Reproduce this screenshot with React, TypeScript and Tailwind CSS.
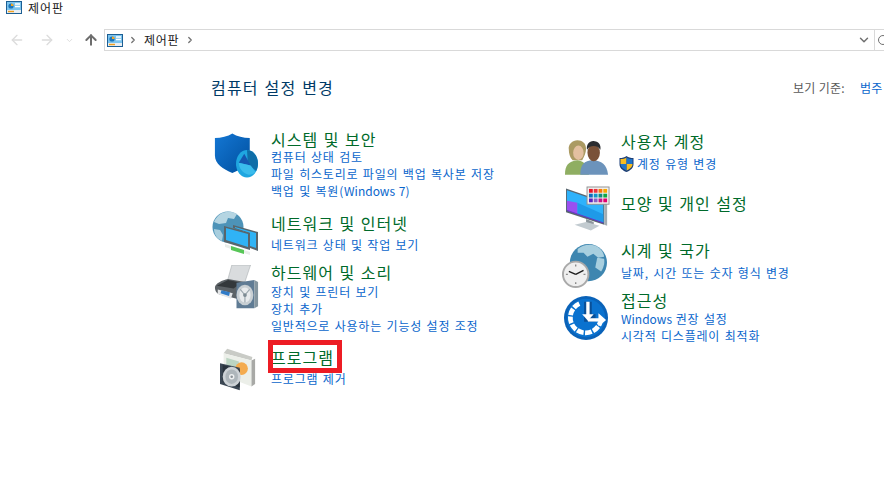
import { ChevronDown, ChevronRight, ArrowLeft, ArrowRight, ArrowUp, RotateCw } from "lucide-react";
import type { ReactNode } from "react";

const font = { fontFamily: '"Noto Sans CJK KR", "Noto Sans", sans-serif' };

function PanelIcon() {
  return (
    <svg width="16" height="13" viewBox="0 0 16 13">
      <rect x="0.5" y="0.5" width="15" height="12" fill="#7cc4ee" stroke="#1c5f94" />
      <rect x="1" y="9" width="14" height="3" fill="#e9eef2" />
      <circle cx="5" cy="5" r="2.6" fill="#1c76bb" />
      <path d="M5 5V2.4A2.6 2.6 0 0 1 7.6 5Z" fill="#f5a623" />
      <path d="M9 3h5M9 5.5h5" stroke="#fff" strokeWidth="1.4" />
      <path d="M2 10.500h6" stroke="#f0a020" strokeWidth="1.4" />
    </svg>
  );
}

function ShieldIcon() {
  return (
    <svg width="44" height="45" viewBox="0 0 48 48">
      <defs>
        <linearGradient id="sh" x1="0" y1="0" x2="1" y2="1">
          <stop offset="0" stopColor="#1477d4" />
          <stop offset="1" stopColor="#004f9e" />
        </linearGradient>
      </defs>
      <path d="M1 5C8 5 15 3 20 0c5 3 12 5 19 5v20C39 33 30 39 20 43 10 39 1 33 1 24Z" fill="url(#sh)" />
      <ellipse cx="36" cy="33" rx="12" ry="15" fill="#1fa6e0" />
      <path d="M36 18c7 0 12 7 12 15 0 3-1 6-2 8l-9-8Z" fill="#0f6ea8" />
      <path d="M33 22l-6 10 13 3Z" fill="#1557b0" />
      <path d="M40 35l-13-3c0 5 4 12 11 13 3 0 6-1 7-3Z" fill="#3bbcec" />
    </svg>
  );
}

function NetworkIcon() {
  return (
    <svg width="48" height="48" viewBox="0 0 48 48">
      <circle cx="16" cy="18" r="15.500" fill="#4d93b8" />
      <path d="M7 6c5-4 13-4 18-1l-3 5-6-1-2 5-7 1-5-2c1-3 3-5 5-7Z" fill="#b5d5e2" />
      <path d="M2 20l6 1 3 5-1 6C5 30 2 25 2 20Z" fill="#a8cede" />
      <path d="M21 16l25 7v19l-8-3v-14l-17-6Z" fill="#59656b" />
      <path d="M23 18l21 6v15l-6-2V24l-15-5Z" fill="#30b3f5" />
      <path d="M12 17l26 7v17l-26-8Z" fill="#59656b" />
      <path d="M14 19l22 6v13l-22-7Z" fill="#30b3f5" />
      <path d="M13 35l25 8v3L13 38Z" fill="#e9edea" />
      <path d="M19 37l13 4v4l-13-4Z" fill="#57c657" />
    </svg>
  );
}

function PrinterIcon() {
  return (
    <svg width="47" height="45" viewBox="0 0 48 48">
      <path d="M19 0h20l-6 18H14Z" fill="#d9dcde" stroke="#9aa0a3" strokeWidth="0.5" />
      <path d="M1 24c0-4 8-8 14-9l18 3v20L8 32c-5-1-7-4-7-8Z" fill="#5c6266" />
      <path d="M3 22l12-6 14 3-8 6Z" fill="#33383b" />
      <path d="M4 26l16 4-2 6-14-5Z" fill="#e4e6e8" />
      <path d="M8 27l9 2-1 4-9-3Z" fill="#2f7bc8" />
      <path d="M24 19l19-3v30l-19 0Z" fill="#5f7b94" />
      <path d="M43 16l4 2v26l-4 2Z" fill="#84959f" />
      <ellipse cx="33" cy="32" rx="9" ry="11" fill="#c8cfd3" />
      <ellipse cx="33" cy="32" rx="6" ry="8" fill="#e8ebed" />
      <path d="M33 32l5-6M33 32l-5-6M33 32v8" stroke="#9aa6ad" strokeWidth="1.2" />
      <circle cx="33" cy="32" r="2" fill="#7d8b93" />
    </svg>
  );
}

function ProgramIcon() {
  return (
    <svg width="36" height="43" viewBox="0 0 40 46">
      <path d="M4 5l4-5 28 9-1 4Z" fill="#c9cbc6" />
      <path d="M4 5l31 8v29L4 30Z" fill="#ecefe9" />
      <path d="M7 10l14 4v12L7 22Z" fill="#bcd5c3" />
      <circle cx="24" cy="22" r="7" fill="#f4ab4e" />
      <path d="M35 13l4-2v28l-4 3Z" fill="#a8a9a6" />
      <path d="M0 16l22 5v25L0 39Z" fill="#3b4754" />
      <path d="M3 18l19 5v20L3 37Z" fill="#29333d" />
      <ellipse cx="13" cy="31" rx="10" ry="11" fill="#cdd2d6" />
      <ellipse cx="13" cy="31" rx="7" ry="8" fill="#aeb6bb" />
      <circle cx="13" cy="31" r="3" fill="#eef0f1" />
      <circle cx="13" cy="31" r="1.4" fill="#8b9298" />
    </svg>
  );
}

function UsersIcon() {
  return (
    <svg width="44" height="35" viewBox="0 0 46 36">
      <path d="M4 10C3 4 8 0 13 0s9 3 9 9c0 4-2 8-4 12H8c-3-3-4-7-4-11Z" fill="#ab9a63" />
      <ellipse cx="14" cy="13" rx="5.500" ry="7.500" fill="#e3bfa0" />
      <path d="M0 36c0-9 3-14 13-15 8 1 11 6 12 15Z" fill="#8fae62" />
      <path d="M16 36c0-10 4-15 13-15 9 0 15 5 16 15Z" fill="#6c93bb" />
      <ellipse cx="30" cy="13" rx="6.500" ry="9" fill="#7a5238" />
      <path d="M23 10c-1-6 3-10 8-9 4 0 7 4 6 9-2-3-4-4-7-4-3 0-5 1-7 4Z" fill="#2b2d30" />
    </svg>
  );
}

function UacShield() {
  return (
    <svg width="15" height="16" viewBox="0 0 15 16" className="shrink-0">
      <path d="M7.500 0c2 1.500 4 2 7 2v6c0 4-3 6.500-7 8-4-1.500-7-4-7-8V2c3 0 5-.5 7-2Z" fill="#1c3f78" />
      <path d="M7.500 1.500v6.500H1.500V3c2.500 0 4.500-.5 6-1.500Z" fill="#f7bd20" />
      <path d="M7.500 1.500c1.500 1 3.500 1.500 6 1.500v5h-6Z" fill="#1f74c9" />
      <path d="M7.500 8h6c0 3-2.500 5-6 6.500Z" fill="#f7bd20" />
      <path d="M7.500 8v6.500C4 13 1.500 11 1.500 8Z" fill="#1f74c9" />
    </svg>
  );
}

function DisplayIcon() {
  return (
    <svg width="44" height="46" viewBox="0 0 46 47">
      <path d="M0 2l40 14v24L0 27Z" fill="#5a6770" />
      <path d="M1 4l38 13v21L1 25Z" fill="#2eb2fb" />
      <path d="M1 15l11 2v12L1 25Z" fill="#9a4ff0" />
      <path d="M12 17l27 12v9L12 29Z" fill="#1f9ae8" />
      <path d="M1 25l38 13" stroke="#6a2ec4" strokeWidth="1" />
      <path d="M40 16l3 2v23l-3-1Z" fill="#a4adb2" />
      <path d="M21 34l8 3v3l-8-2Z" fill="#8d979d" />
      <path d="M9 40l12-3 14 4-9 5Z" fill="#c2cbd0" />
      <rect x="22" y="0.500" width="23" height="18" fill="#f4f4f4" stroke="#8f8f8f" />
      {["#e81123", "#e8343e", "#f7790b", "#f7a700", "#0f6cbd", "#1096c8", "#128a7d", "#10a845", "#5a1ec0", "#8561c4", "#c3178a", "#e3006d"].map((c, i) => (
        <rect key={c} x={24 + (i % 4) * 5} y={2.5 + Math.floor(i / 4) * 5} width="4" height="4" fill={c} />
      ))}
    </svg>
  );
}

function ClockIcon() {
  return (
    <svg width="45" height="45" viewBox="0 0 46 46">
      <circle cx="27" cy="19" r="19" fill="#3e86b0" />
      <path d="M16 5c6-5 16-6 22-1 3 2 5 6 5 9l-6 1-5-4-6 3-4-4-6 0Z" fill="#a8cfdf" />
      <path d="M36 14l7 1c1 5-1 10-3 13l-6-4Z" fill="#a8cfdf" />
      <circle cx="14" cy="31" r="14" fill="#a9a9a9" />
      <circle cx="14" cy="31" r="12" fill="#efefef" />
      <path d="M14 31l-7-3M14 31l8-4" stroke="#1c1c1c" strokeWidth="1.4" />
      <path d="M14 21v2M14 39v2M4 31h2M22 31h2" stroke="#8a8a8a" strokeWidth="1.4" />
    </svg>
  );
}

function AccessIcon() {
  return (
    <svg width="44" height="44" viewBox="0 0 46 46">
      <circle cx="23" cy="23" r="23" fill="#0a62b8" />
      <circle cx="23" cy="23" r="20" fill="#0a72cf" />
      <path d="M16 8a16 16 0 1 0 22 19" fill="none" stroke="#fff" strokeWidth="5" strokeDasharray="7 1.500" />
      <path d="M25 6v17h8" fill="none" stroke="#0a4f96" strokeWidth="8" />
      <path d="M25 6v17" stroke="#fff" strokeWidth="3.500" />
      <path d="M19 19l6 7 6-7Z" fill="#fff" />
      <path d="M25 25h13" stroke="#fff" strokeWidth="3.500" />
      <path d="M36 18l8 7-8 7Z" fill="#fff" />
    </svg>
  );
}

function Category({
  icon,
  iconClass,
  title,
  links,
  linksClass,
  className,
  boxed,
}: {
  icon: ReactNode;
  iconClass: string;
  title: string;
  links: ReactNode[];
  linksClass?: string;
  className: string;
  boxed?: boolean;
}) {
  return (
    <div className={`flex ${className}`}>
      <div className={iconClass}>{icon}</div>
      <div className="pt-[2px]">
        <div className="relative w-fit">
          <div className="whitespace-nowrap text-[16px] leading-[18px] tracking-[1px] text-[#006a2a] [word-spacing:1px]">{title}</div>
          {boxed && <div className="absolute left-[-3px] top-[-8px] h-[33px] w-[74px] border-[5px] border-[#ed1c24]" />}
        </div>
        <div className={linksClass}>
          {links.map((l, i) => (
            <div key={i} className="whitespace-nowrap text-[12px] leading-[17px] tracking-[0.8px] text-[#0a66cc] [word-spacing:1px]">
              {l}
            </div>
          ))}
        </div>
      </div>
    </div>
  );
}

// the latin part of a link sits tighter than the hangul around it
function Latin({ children }: { children: ReactNode }) {
  return <span className="tracking-normal">{children}</span>;
}

export default function App() {
  return (
    <div className="h-[502px] w-[884px] overflow-hidden bg-white" style={font}>
      <div className="flex h-[15px] items-center pl-[6px]">
        <PanelIcon />
        <span className="ml-[6px] text-[12px] leading-none tracking-[1px] text-[#1a1a1a]">제어판</span>
      </div>

      <div className="mt-[14px] flex h-[22px] items-center">
        <div className="flex w-[104px] items-center pl-[9px]">
          <ArrowLeft size={16} strokeWidth={2} className="text-[#dcdcdc]" />
          <ArrowRight size={16} strokeWidth={2} className="ml-[14px] text-[#dcdcdc]" />
          <ChevronDown size={9} strokeWidth={2.5} className="ml-[10px] text-[#dcdcdc]" />
          <ArrowUp size={16} strokeWidth={3} className="ml-[9px] text-[#6d6d6d]" />
        </div>
        <div className="flex h-[22px] flex-1 items-center border border-r-0 border-[#d9d9d9]">
          <div className="ml-[2px]"><PanelIcon /></div>
          <ChevronRight size={10} strokeWidth={3} className="ml-[5px] text-[#707070]" />
          <span className="ml-[6px] text-[12px] tracking-[0.7px] text-[#1a1a1a]">제어판</span>
          <ChevronRight size={10} strokeWidth={3} className="ml-[6px] text-[#707070]" />
          <div className="flex-1" />
          <ChevronDown size={14} strokeWidth={2.5} className="mr-[2px] text-[#707070]" />
          <div className="ml-[1px] flex h-full w-[10px] items-center border-l border-[#d9d9d9] pl-[2px]">
            <RotateCw size={12} strokeWidth={2} className="shrink-0 text-[#707070]" />
          </div>
        </div>
      </div>

      <div className="mt-[25px] flex items-center justify-between pl-[211px]">
        <div className="text-[16px] leading-[22px] tracking-[1.2px] text-[#003a66] [word-spacing:1px]">컴퓨터 설정 변경</div>
        <div className="mt-[1px] flex w-[91px] text-[12px] tracking-[0.3px]">
          <span className="whitespace-nowrap text-[#5a5a5a]">보기 기준:</span>
          <span className="ml-[15px] whitespace-nowrap text-[#0a66cc]">범주</span>
        </div>
      </div>

      <div className="mt-[30px] grid grid-cols-[354px_1fr] pl-[211px]">
        <div>
          <Category
            className="h-[84px]"
            iconClass="ml-[3px] mt-[5px] w-[57px] shrink-0"
            icon={<ShieldIcon />}
            title="시스템 및 보안"
            linksClass="mt-[0px]"
            links={["컴퓨터 상태 검토", "파일 히스토리로 파일의 백업 복사본 저장", <>백업 및 복원(<Latin>Windows 7)</Latin></>]}
          />
          <Category
            className="h-[49px]"
            iconClass="ml-[1px] -mt-[3px] w-[59px] shrink-0"
            icon={<NetworkIcon />}
            title="네트워크 및 인터넷"
            linksClass="mt-[4px]"
            links={["네트워크 상태 및 작업 보기"]}
          />
          <Category
            className="h-[85px]"
            iconClass="ml-[2px] mt-[4px] w-[58px] shrink-0"
            icon={<PrinterIcon />}
            title="하드웨어 및 소리"
            linksClass="mt-[2px]"
            links={["장치 및 프린터 보기", "장치 추가", "일반적으로 사용하는 기능성 설정 조정"]}
          />
          <Category
            className="h-[50px]"
            iconClass="ml-[9px] mt-[2px] w-[51px] shrink-0"
            icon={<ProgramIcon />}
            title="프로그램"
            linksClass="mt-[4px]"
            links={["프로그램 제거"]}
            boxed
          />
        </div>
        <div className="pt-[2px]">
          <Category
            className="h-[62px]"
            iconClass="mt-[10px] w-[56px] shrink-0"
            icon={<UsersIcon />}
            title="사용자 계정"
            linksClass="mt-[5px]"
            links={[
              <span className="flex items-center gap-[3px]"><span className="-ml-[2px]"><UacShield /></span>계정 유형 변경</span>,
            ]}
          />
          <Category
            className="h-[47px]"
            iconClass="ml-[1px] -mt-[6px] w-[55px] shrink-0"
            icon={<DisplayIcon />}
            title="모양 및 개인 설정"
            links={[]}
          />
          <Category
            className="h-[50px]"
            iconClass="-ml-[3px] mt-[5px] w-[59px] shrink-0"
            icon={<ClockIcon />}
            title="시계 및 국가"
            linksClass="mt-[5px]"
            links={["날짜, 시간 또는 숫자 형식 변경"]}
          />
          <Category
            className="h-[50px]"
            iconClass="-ml-[1px] mt-[7px] w-[57px] shrink-0"
            icon={<AccessIcon />}
            title="접근성"
            linksClass="mt-[1px]"
            links={[<><Latin>Windows </Latin>권장 설정</>, "시각적 디스플레이 최적화"]}
          />
        </div>
      </div>
    </div>
  );
}
